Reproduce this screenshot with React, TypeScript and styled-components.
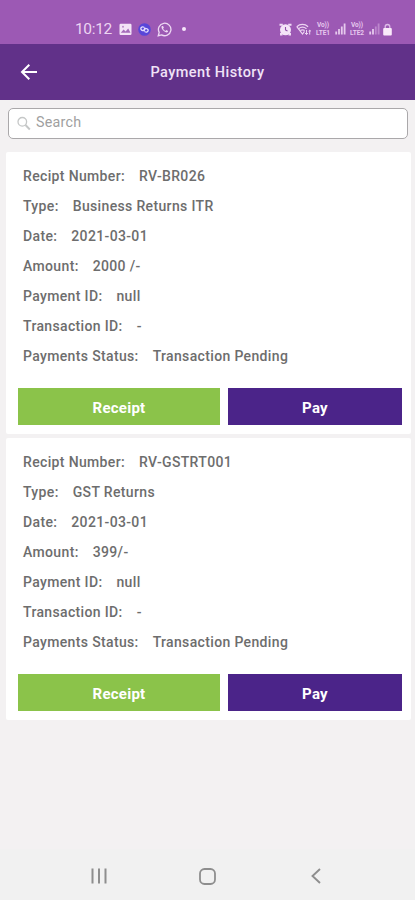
import React from "react";
import styled, { createGlobalStyle } from "styled-components";

const GlobalStyle = createGlobalStyle`
  * { box-sizing: border-box; }
  body { margin: 0; background: #f3f1f2; font-family: Roboto, "Liberation Sans", sans-serif; }
`;

const Screen = styled.div`
  display: flex;
  flex-direction: column;
  width: 415px;
  height: 900px;
  background: #f3f1f2;
  overflow: hidden;
`;

const StatusBar = styled.div`
  display: flex;
  flex: none;
  justify-content: space-between;
  align-items: center;
  height: 44px;
  padding: 14px 23px 0 75px;
  background: #9c59b4;
  color: #ecd5f2;
`;

const StatusGroup = styled.div<{ $gap: number }>`
  display: flex;
  align-items: center;
  gap: ${(p) => p.$gap}px;
  svg { display: block; flex: none; }
`;

const Clock = styled.span`
  width: 37px;
  margin-right: 1px;
  font-size: 15.5px;
  line-height: 18px;
  letter-spacing: -0.35px;
  white-space: nowrap;
`;

const Dot = styled.span`
  width: 4px;
  height: 4px;
  margin: -1px 0 0 4px;
  border-radius: 50%;
  background: #f6e6fa;
`;

const Header = styled.header`
  display: grid;
  flex: none;
  grid-template-columns: 58px 1fr 58px;
  align-items: center;
  height: 56px;
  background: #613189;
  color: #fff;
`;

const BackButton = styled.button`
  display: flex;
  padding: 0 0 0 20px;
  border: 0;
  background: none;
  color: #fff;
`;

const Title = styled.h1`
  margin: 2px 0 0;
  font-size: 14.5px;
  font-weight: 500;
  line-height: 20px;
  letter-spacing: 0.44px;
  text-align: center;
  color: #f0e2f7;
`;

const SearchBox = styled.label`
  display: flex;
  flex: none;
  align-items: flex-start;
  height: 31px;
  margin: 8px 7px 0 8px;
  padding: 4px 9px 0 8px;
  border: 1px solid #aaa8aa;
  border-radius: 5px;
  background: #fff;
  svg { flex: none; margin-top: 3px; }
`;

const SearchInput = styled.input`
  flex: 1;
  min-width: 0;
  height: 18px;
  margin-left: 5px;
  padding: 0;
  border: 0;
  outline: 0;
  background: none;
  font: 400 14.3px/18px Roboto, sans-serif;
  letter-spacing: 0.25px;
  &::placeholder { color: #a09fa0; opacity: 1; }
`;

const List = styled.main`
  display: flex;
  flex: 1;
  flex-direction: column;
  gap: 4px;
  padding: 13px 4px 0 6px;
`;

const Card = styled.section`
  height: 282px;
  padding: 9px 9px 0 12px;
  border-radius: 2px;
  background: #fff;
`;

const Row = styled.div`
  display: flex;
  align-items: center;
  gap: 14px;
  height: 30px;
  padding-left: 5px;
  font-size: 14px;
  font-weight: 500;
  letter-spacing: 0.35px;
  white-space: pre;
  color: #6d6d6d;
`;

const Actions = styled.div`
  display: grid;
  grid-template-columns: 202px 174px;
  gap: 8px;
  margin-top: 17px;
`;

const ActionButton = styled.button<{ $color: string }>`
  height: 37px;
  padding: 2px 0 0;
  border: 0;
  background: ${(p) => p.$color};
  color: #fff;
  font: 700 15px/20px Roboto, sans-serif;
  letter-spacing: 0.25px;
`;

const NavBar = styled.nav`
  display: flex;
  flex: none;
  height: 51px;
  padding: 0 45px;
  background: #f1f1f1;
  color: #8e8e8e;
`;

const NavItem = styled.span`
  display: flex;
  flex: 1;
  align-items: center;
  justify-content: center;
  padding-top: 3px;
`;

const PictureIcon = () => (
  <svg width="13" height="13" viewBox="0 0 13 13">
    <rect x="0.5" y="0.8" width="12" height="11.2" rx="1.2" fill="#f3e3f7" />
    <path d="M1.8 9.8 4.6 6.6l2 2 2.6-3 2.3 4.2z" fill="#a56bbb" />
    <circle cx="4" cy="3.8" r="1" fill="#b98bca" />
  </svg>
);

const LinkIcon = () => (
  <svg width="13" height="13" viewBox="0 0 13 13">
    <circle cx="6.5" cy="6.5" r="6.3" fill="#5846d9" />
    <path
      d="M6 4.300C4.500 3.500 2.800 4.200 2.800 5.700c0 1.600 1.800 1.900 3.700 1.900M7 8.700c1.500.8 3.200.1 3.200-1.400 0-1.600-1.800-1.900-3.700-1.900M5.300 7.500 7.700 5.500"
      fill="none" stroke="#e4dcff" strokeWidth="1.3" strokeLinecap="round"
    />
  </svg>
);

const ChatIcon = () => (
  <svg width="15" height="15" viewBox="0 0 24 24" fill="none" stroke="#edd8f3" strokeWidth="2.1">
    <path d="M2 22l1.500-5.300A10 10 0 1 1 7.300 20.600z" />
    <path d="M8 6.500c-1.800 1.500-.6 4.500 2 7.200 2.700 2.700 5.900 4 7.500 2l.2-1.500-2.700-1.300-1.400 1.300c-1.700-.6-3.200-2.100-3.900-3.800L11 9 9.700 6.500z" fill="#edd8f3" stroke="none" />
  </svg>
);

const AlarmIcon = () => (
  <svg width="13" height="13" viewBox="0 0 13 13">
    <path d="M.5.8h3.300v2H.5zM9.200.8h3.300v2H9.200zM1 10h2.500v2.500H1zM9.500 10H12v2.500H9.500z" fill="#f0dcf5" />
    <circle cx="6.500" cy="6.800" r="5.500" fill="#f4e4f8" />
    <path d="M6.500 4v3l2 1" fill="none" stroke="#9050a9" strokeWidth="1.100" />
  </svg>
);

const WifiIcon = () => (
  <svg width="16" height="13" viewBox="0 0 16 13" fill="none" stroke="#ecd4f2" strokeWidth="1.200">
    <path d="M.8 3.700c3.300-3 8-3 11.300 0M2.500 5.700c2.500-2 5.500-2 8 0M4.300 7.600c1.500-1 2.900-1 4.400 0" />
    <path d="M.8 3.700 6.500 11l2-2.600" />
    <path d="M10.500 7v4.500M9 10l1.500 1.600L12 10M13.700 11.600V7.200M12.500 8.400l1.200-1.200 1.300 1.200" strokeWidth="1" />
  </svg>
);

const LteText = styled.span`
  display: flex;
  flex-direction: column;
  align-items: center;
  width: 16px;
  font: 700 6.5px/8px Roboto, sans-serif;
  letter-spacing: -0.1px;
  white-space: nowrap;
  color: #e7c8ee;
`;

const SignalIcon = ({ level }: { level: number }) => (
  <svg width="11" height="12" viewBox="0 0 11 12">
    {[3, 5.500, 8, 11].map((h, i) => (
      <rect key={h} x={0.300 + i * 2.800} y={11.500 - h} width="1.800" height={h} fill={i < level ? "#e6c9ed" : "#bd87cd"} />
    ))}
  </svg>
);

const LockIcon = () => (
  <svg width="9" height="13" viewBox="0 0 9 13">
    <path d="M2.200 6V3.800a2.300 2.300 0 0 1 4.600 0V6" fill="none" stroke="#ddbae7" strokeWidth="1.300" />
    <rect x="0.200" y="5" width="8.600" height="7.500" rx="1" fill="#fae9fa" />
  </svg>
);

type Payment = { number: string; type: string; date: string; amount: string };

const payments: Payment[] = [
  { number: "RV-BR026", type: "Business Returns ITR", date: "2021-03-01", amount: "2000 /-" },
  { number: "RV-GSTRT001", type: "GST Returns", date: "2021-03-01", amount: "399/-" },
];

const PaymentCard = ({ payment }: { payment: Payment }) => {
  const fields = [
    ["Recipt Number:", payment.number],
    ["Type:", payment.type],
    ["Date:", payment.date],
    ["Amount:", payment.amount],
    ["Payment ID:", "null"],
    ["Transaction ID:", "-"],
    ["Payments Status:", "Transaction Pending"],
  ];
  return (
    <Card>
      {fields.map(([label, value]) => (
        <Row key={label}>
          <span>{label}</span>
          <span>{value}</span>
        </Row>
      ))}
      <Actions>
        <ActionButton $color="#8bc34a">Receipt</ActionButton>
        <ActionButton $color="#4b2489">Pay</ActionButton>
      </Actions>
    </Card>
  );
};

export default function App() {
  return (
    <>
      <GlobalStyle />
      <Screen>
        <StatusBar>
          <StatusGroup $gap={6}>
            <Clock>10:12</Clock>
            <PictureIcon />
            <LinkIcon />
            <ChatIcon />
            <Dot />
          </StatusGroup>
          <StatusGroup $gap={3.5}>
            <AlarmIcon />
            <WifiIcon />
            <LteText><span>Vo))</span><span>LTE1</span></LteText>
            <SignalIcon level={4} />
            <LteText><span>Vo))</span><span>LTE2</span></LteText>
            <SignalIcon level={2} />
            <LockIcon />
          </StatusGroup>
        </StatusBar>
        <Header>
          <BackButton aria-label="Back">
            <svg width="18" height="18" viewBox="0 0 18 18" fill="none" stroke="currentColor" strokeWidth="2">
              <path d="M17 9H2.500M9.300 1.700 2 9l7.300 7.300" />
            </svg>
          </BackButton>
          <Title>Payment History</Title>
        </Header>
        <SearchBox>
          <svg width="14" height="15" viewBox="0 0 14 15" fill="none" stroke="#c5c7c7">
            <circle cx="5.300" cy="5.800" r="4.300" strokeWidth="1.300" />
            <path d="m8.500 9 4.300 4.500" strokeWidth="1.900" />
          </svg>
          <SearchInput placeholder="Search" />
        </SearchBox>
        <List>
          {payments.map((p) => (
            <PaymentCard key={p.number} payment={p} />
          ))}
        </List>
        <NavBar>
          <NavItem>
            <svg width="16" height="16" viewBox="0 0 16 16" stroke="currentColor" strokeWidth="2">
              <path d="M1.500.5v15M8 .5v15M14.500.5v15" />
            </svg>
          </NavItem>
          <NavItem>
            <svg width="17" height="17" viewBox="0 0 17 17" fill="none" stroke="currentColor" strokeWidth="1.800">
              <rect x="1" y="1" width="15" height="15" rx="4.500" />
            </svg>
          </NavItem>
          <NavItem>
            <svg width="10" height="16" viewBox="0 0 10 16" fill="none" stroke="currentColor" strokeWidth="1.900">
              <path d="M9 1 1.500 8 9 15" />
            </svg>
          </NavItem>
        </NavBar>
      </Screen>
    </>
  );
}
